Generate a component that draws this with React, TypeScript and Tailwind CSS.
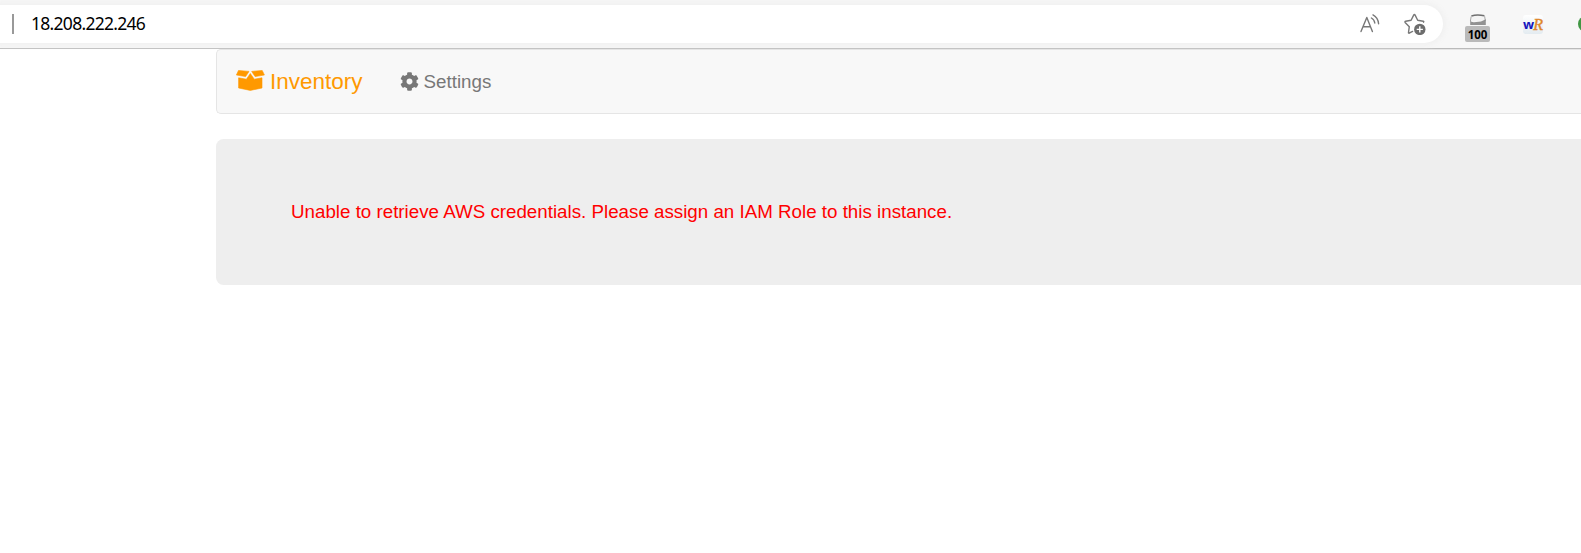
import { FaCog } from "react-icons/fa";

function OpenBoxIcon() {
  return (
    <svg width="29" height="21" viewBox="0 0 29 21" fill="#ff9900" stroke="#ff9900" strokeWidth="0.6" strokeLinejoin="round">
      <path d="M2.5.4 13 1.4 9.6 6.6.4 5z" />
      <path d="M26.2.4 15.7 1.4 19.1 6.6 28.4 5z" />
      <path d="M2.6 7.8 10.4 9.2 14.3 3.5 18.3 9.2 26 7.8V18L14.3 20.4 2.6 18z" />
    </svg>
  );
}

function ReadAloudIcon() {
  return (
    <svg width="20" height="20" viewBox="0 0 20 20" fill="none" stroke="#777777" strokeWidth="1.4" strokeLinecap="round" strokeLinejoin="round">
      <path d="M1 17.5 6.8 3.4 12.4 17.5M3.1 12.8h7.4" />
      <path d="M11.4 4q2.9 1.5 3.4 5M13 .9q5 2.6 5.6 8.9" />
    </svg>
  );
}

function FavoriteIcon() {
  return (
    <svg width="22" height="22" viewBox="0 0 22 22" fill="none">
      <path d="M8.6 18.4 5.2 20.2Q4.4 20.4 4.5 19.5L5.3 13.7 1.1 9.4Q.6 8.5 1.7 8.2L7.1 7.3 9.8 1.9Q10.4.9 11 1.9L13.7 7.3 19.2 8.2Q20.1 8.5 19.6 9.2" stroke="#777777" strokeWidth="1.4" strokeLinejoin="round" strokeLinecap="round" />
      <circle cx="15.8" cy="16.4" r="5.7" fill="#6d6d6d" />
      <path d="M15.8 13.3v6.2M12.7 16.4h6.2" stroke="#fff" strokeWidth="1.4" />
    </svg>
  );
}

function ZoomExtension() {
  return (
    <div className="flex w-[25px] flex-col items-center">
      <svg width="18" height="13" viewBox="0 0 18 13">
        <path d="M2.6 1.8 15 1.6 16 6.6 2 7z" fill="#f4f4f4" />
        <path d="M2.4 2Q8 .2 15.4 1.8" stroke="#707070" strokeWidth="1.6" fill="none" />
        <path d="M2.2 2.4 1.4 7M15.6 2.2 16.4 7" stroke="#a8a8a8" fill="none" />
        <path d="M1.2 6.2Q2 8.4 5 8.2L12 7.4 16.8 5.2V11H1.2z" fill="#929292" />
      </svg>
      <div className="-mt-px flex h-[16px] w-[25px] items-center justify-center rounded-[2px] bg-[#bababa] pt-px font-['Open_Sans',sans-serif] text-[11.5px] leading-none font-bold tracking-[-0.1px] text-black">100</div>
    </div>
  );
}

function DictionaryExtension() {
  return (
    <div className="flex h-[19px] w-[20px] items-center justify-center rounded-[3px] bg-linear-to-b from-white to-[#e3ebf0] leading-none">
      <span className="font-['Open_Sans',sans-serif] text-[13px] font-bold text-[#1717bd]">w</span>
      <span className="-ml-px font-['Liberation_Serif',serif] text-[16px] text-[#df862a] italic [-webkit-text-stroke:0.4px_#df862a]">R</span>
    </div>
  );
}

function BrowserBar() {
  return (
    <header className="flex h-[49px] shrink-0 items-start border-b border-[#bababa] bg-[#f7f7f7]">
      <div className="mt-[5px] flex h-[38px] w-[1443px] shrink-0 items-center rounded-r-full bg-white shadow-[0_0_5px_3px_#f1f1f1]">
        <div className="ml-[12px] h-[20px] w-[2px] bg-[#999999]" />
        <div className="ml-[17px] font-['Noto_Sans',sans-serif] text-[17.5px] leading-none tracking-[-0.72px] text-black">18.208.222.246</div>
        <div className="mr-[17px] ml-auto flex items-center gap-[24px]">
          <ReadAloudIcon />
          <FavoriteIcon />
        </div>
      </div>
      <div className="mt-[14px] ml-[22px] shrink-0"><ZoomExtension /></div>
      <div className="mt-[15px] ml-[33px] shrink-0"><DictionaryExtension /></div>
      <div className="mt-[16px] ml-[35px] h-[16px] w-[16px] shrink-0 rounded-full bg-[#419744]" />
    </header>
  );
}

export default function App() {
  return (
    <div className="flex h-[553px] w-full flex-col overflow-hidden bg-white font-['Liberation_Sans',Arial,sans-serif]">
      <BrowserBar />
      <main className="ml-[216px] flex flex-col gap-[25px]">
        <nav className="flex h-[65px] items-center rounded-l-[5px] border border-r-0 border-[#e5e5e5] bg-[#f8f8f8] pl-[19px]">
          <a className="flex items-center gap-[5px] text-[22.5px] leading-none text-[#ff9900]">
            <span className="pb-[2px]"><OpenBoxIcon /></span>
            <span className="pt-px">Inventory</span>
          </a>
          <a className="ml-[37px] flex items-center gap-[5px] text-[18.75px] leading-none text-[#777777]">
            <FaCog className="size-[19px]" />
            <span className="pt-[2px]">Settings</span>
          </a>
        </nav>
        <section className="h-[146px] rounded-l-[7.5px] bg-[#eeeeee] pt-[62px] pl-[75px]">
          <p className="text-[18.75px] leading-[22px] text-[#ff0000]">Unable to retrieve AWS credentials. Please assign an IAM Role to this instance.</p>
        </section>
      </main>
    </div>
  );
}
